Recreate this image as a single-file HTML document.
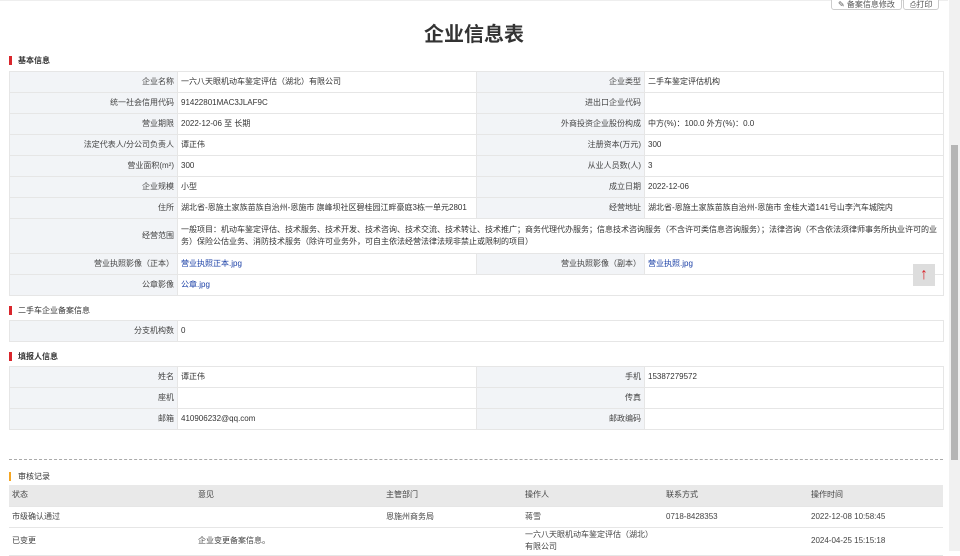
<!DOCTYPE html>
<html><head><meta charset="utf-8"><style>
*{margin:0;padding:0;box-sizing:border-box}
body{width:960px;height:551px;overflow:hidden;background:#fff;font-family:"Liberation Sans","Noto Sans CJK SC",sans-serif;font-size:8px;color:#333;position:relative}
.frame{position:absolute;left:0;top:0;width:948px;height:551px;border-top:1px solid #eee}
.scroll{position:absolute;left:949px;top:0;width:11px;height:551px;background:#f1f1f1}
.thumb{position:absolute;left:951px;top:145px;width:7px;height:315px;background:#b5b5b5}
h1{position:absolute;left:0;width:948px;top:18px;text-align:center;font-size:20px;font-weight:bold;color:#333}
.btn{position:absolute;top:-6px;height:16px;border:1px solid #ccc;border-radius:3px;font-size:8px;color:#555;padding:4px 6px 0;background:#fff}
.sec{position:absolute;left:9px;font-size:8px;font-weight:bold;color:#333;padding-left:9px;height:9px;line-height:9px}
.sec:before{content:"";position:absolute;left:0;top:0;width:3px;height:9px;background:#d9262c}
.sec.y:before{background:#f5a623;width:2px}
table{position:absolute;left:9px;width:934px;border-collapse:collapse;table-layout:fixed}
td{border:1px solid #e6e6e6;height:21px;padding:0 3px;vertical-align:middle;line-height:12px}
td.l{background:#f2f4f7;text-align:right;color:#444}
a{color:#1a3fa6;text-decoration:none}
.dash{position:absolute;left:9px;top:459px;width:934px;border-top:1px dashed #aaa}
.rec td{border:none;border-bottom:1px solid #e6e6e6;padding:0 3px;color:#444}
.top{position:absolute;left:913px;top:264px;width:22px;height:22px;background:#ddd;color:#d9262c;font-size:16px;text-align:center;line-height:22px}
</style></head><body>
<div class="frame"></div>
<div class="scroll"></div><div class="thumb"></div>
<div class="btn" style="left:831px">✎ 备案信息修改</div>
<div class="btn" style="left:903px">⎙打印</div>
<h1>企业信息表</h1>
<div class="sec" style="top:56px">基本信息</div>
<table style="top:71px">
<colgroup><col style="width:168px"><col style="width:299px"><col style="width:168px"><col style="width:299px"></colgroup>
<tr><td class="l">企业名称</td><td>一六八天眼机动车鉴定评估（湖北）有限公司</td><td class="l">企业类型</td><td>二手车鉴定评估机构</td></tr>
<tr><td class="l">统一社会信用代码</td><td>91422801MAC3JLAF9C</td><td class="l">进出口企业代码</td><td></td></tr>
<tr><td class="l">营业期限</td><td>2022-12-06 至 长期</td><td class="l">外商投资企业股份构成</td><td>中方(%)：100.0 外方(%)：0.0</td></tr>
<tr><td class="l">法定代表人/分公司负责人</td><td>谭正伟</td><td class="l">注册资本(万元)</td><td>300</td></tr>
<tr><td class="l">营业面积(m²)</td><td>300</td><td class="l">从业人员数(人)</td><td>3</td></tr>
<tr><td class="l">企业规模</td><td>小型</td><td class="l">成立日期</td><td>2022-12-06</td></tr>
<tr><td class="l">住所</td><td>湖北省-恩施土家族苗族自治州-恩施市 旗峰坝社区碧桂园江畔豪庭3栋一单元2801</td><td class="l">经营地址</td><td>湖北省-恩施土家族苗族自治州-恩施市 金桂大道141号山李汽车城院内</td></tr>
<tr><td class="l" style="height:35px">经营范围</td><td colspan="3">一般项目：机动车鉴定评估、技术服务、技术开发、技术咨询、技术交流、技术转让、技术推广；商务代理代办服务；信息技术咨询服务（不含许可类信息咨询服务）；法律咨询（不含依法须律师事务所执业许可的业务）保险公估业务、消防技术服务（除许可业务外，可自主依法经营法律法规非禁止或限制的项目）</td></tr>
<tr><td class="l">营业执照影像（正本）</td><td><a>营业执照正本.jpg</a></td><td class="l">营业执照影像（副本）</td><td><a>营业执照.jpg</a></td></tr>
<tr><td class="l">公章影像</td><td colspan="3"><a>公章.jpg</a></td></tr>
</table>
<div class="sec" style="top:306px;font-weight:normal">二手车企业备案信息</div>
<table style="top:320px">
<colgroup><col style="width:168px"><col style="width:766px"></colgroup>
<tr><td class="l">分支机构数</td><td>0</td></tr></table>
<div class="sec" style="top:352px">填报人信息</div>
<table style="top:366px">
<colgroup><col style="width:168px"><col style="width:299px"><col style="width:168px"><col style="width:299px"></colgroup>
<tr><td class="l">姓名</td><td>谭正伟</td><td class="l">手机</td><td>15387279572</td></tr>
<tr><td class="l">座机</td><td></td><td class="l">传真</td><td></td></tr>
<tr><td class="l">邮箱</td><td>410906232@qq.com</td><td class="l">邮政编码</td><td></td></tr>
</table>
<div class="top">↑</div>
<div class="dash"></div>
<div class="sec y" style="top:472px;font-weight:normal">审核记录</div>
<table class="rec" style="top:485px">
<colgroup><col style="width:186px"><col style="width:188px"><col style="width:139px"><col style="width:141px"><col style="width:145px"><col style="width:135px"></colgroup>
<tr style="background:#e9e9e9"><td style="height:19px">状态</td><td>意见</td><td>主管部门</td><td>操作人</td><td>联系方式</td><td>操作时间</td></tr>
<tr><td style="height:16px">市级确认通过</td><td></td><td>恩施州商务局</td><td>蒋雪</td><td>0718-8428353</td><td>2022-12-08 10:58:45</td></tr>
<tr><td style="height:28px">已变更</td><td>企业变更备案信息。</td><td></td><td>一六八天眼机动车鉴定评估（湖北）<br>有限公司</td><td></td><td>2024-04-25 15:15:18</td></tr>
</table>
</body></html>
